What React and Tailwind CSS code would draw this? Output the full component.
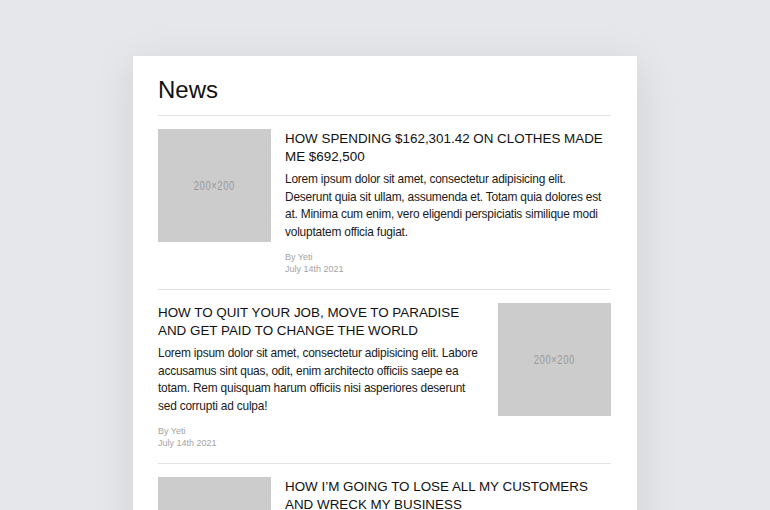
const articles = [
  {
    id: 1,
    title: "How spending $162,301.42 on clothes made me $692,500",
    body: "Lorem ipsum dolor sit amet, consectetur adipisicing elit. Deserunt quia sit ullam, assumenda et. Totam quia dolores est at. Minima cum enim, vero eligendi perspiciatis similique modi voluptatem officia fugiat.",
    imageRight: false,
  },
  {
    id: 2,
    title: "How to quit your job, move to paradise and get paid to change the world",
    body: "Lorem ipsum dolor sit amet, consectetur adipisicing elit. Labore accusamus sint quas, odit, enim architecto officiis saepe ea totam. Rem quisquam harum officiis nisi asperiores deserunt sed corrupti ad culpa!",
    imageRight: true,
  },
  {
    id: 3,
    title: "How I’m going to lose all my customers and wreck my business",
    body: "Lorem ipsum dolor sit amet, consectetur adipisicing elit. Quos voluptatum, aliquid laborum ducimus nostrum repellendus, dolores sapiente iusto minima.",
    imageRight: false,
  },
];

function Placeholder() {
  return (
    <div className="w-[113px] h-[113px] shrink-0 bg-[#cccccc] flex items-center justify-center">
      <span className="inline-block text-[12px] leading-none tracking-[0.8px] scale-x-[0.78] text-[#989898]">
        200×200
      </span>
    </div>
  );
}

function Article({ a }) {
  return (
    <article
      className={`flex gap-[14px] pt-[13px] pb-[14px] border-t border-[#e3e3e3] ${
        a.imageRight ? "flex-row-reverse" : ""
      }`}
    >
      <Placeholder />
      <div className="flex-1 min-w-0">
        <h2 className="uppercase text-[13.4px] leading-[18px] text-[#111] mt-[1px]">
          {a.title}
        </h2>
        <p className="mt-[5px] text-[11.9px] tracking-[-0.2px] leading-[17.5px] text-[#1a1a1a]">
          {a.body}
        </p>
        <div className="mt-[10px] text-[9px] leading-[12px] text-[#a3a3a3]">
          <div>By Yeti</div>
          <div>July 14th 2021</div>
        </div>
      </div>
    </article>
  );
}

export default function App() {
  return (
    <div className="min-h-screen bg-[#e5e7eb] pt-[56px] font-['Liberation_Sans',Arial,sans-serif]">
      <div className="w-[504px] mx-auto bg-white pl-[25px] pr-[26px] pt-[22px] pb-[20px] shadow-[0_10px_40px_rgba(0,0,0,0.10)]">
        <h1 className="text-[24px] leading-[24px] text-[#111] mb-[13px]">News</h1>
        {articles.map((a) => (
          <Article key={a.id} a={a} />
        ))}
      </div>
    </div>
  );
}
